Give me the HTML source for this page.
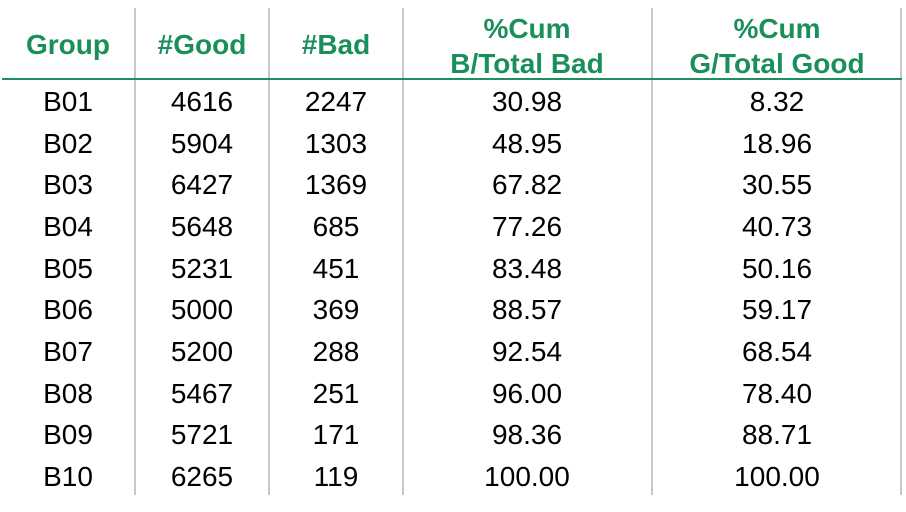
<!DOCTYPE html>
<html><head><style>
body{margin:0;width:906px;height:512px;background:#fff;position:relative;overflow:hidden;font-family:"Liberation Sans",Arial,sans-serif}
.v{position:absolute;top:8px;height:487px;width:2px;background:#c8c8c8}
.h{position:absolute;left:2px;width:900px;top:78px;height:2px;background:#1f8f5f}
.t{position:absolute;width:240px;text-align:center;font-size:28px;color:#000;line-height:30px}
.g{color:#1a8f5c;font-weight:bold;font-size:28px}
</style></head><body>
<div class="v" style="left:134px"></div>
<div class="v" style="left:268px"></div>
<div class="v" style="left:402px"></div>
<div class="v" style="left:651px"></div>
<div class="v" style="left:900px"></div>
<div class="h"></div>
<div class="t g" style="left:-52px;top:30px">Group</div>
<div class="t g" style="left:82px;top:30px">#Good</div>
<div class="t g" style="left:216px;top:30px">#Bad</div>
<div class="t g" style="left:407px;top:11px;line-height:35px">%Cum<br>B/Total Bad</div>
<div class="t g" style="left:657px;top:11px;line-height:35px">%Cum<br>G/Total Good</div>
<div id="rows"></div>
<script>
var d=[["B01",4616,2247,"30.98","8.32"],["B02",5904,1303,"48.95","18.96"],["B03",6427,1369,"67.82","30.55"],["B04",5648,685,"77.26","40.73"],["B05",5231,451,"83.48","50.16"],["B06",5000,369,"88.57","59.17"],["B07",5200,288,"92.54","68.54"],["B08",5467,251,"96.00","78.40"],["B09",5721,171,"98.36","88.71"],["B10",6265,119,"100.00","100.00"]];
var x=[-52,82,216,407,657],h="";
d.forEach(function(r,i){var y=87+i*41.67;r.forEach(function(c,j){h+='<div class="t" style="left:'+x[j]+'px;top:'+y+'px">'+c+'</div>';});});
document.getElementById("rows").innerHTML=h;
</script>
</body></html>
